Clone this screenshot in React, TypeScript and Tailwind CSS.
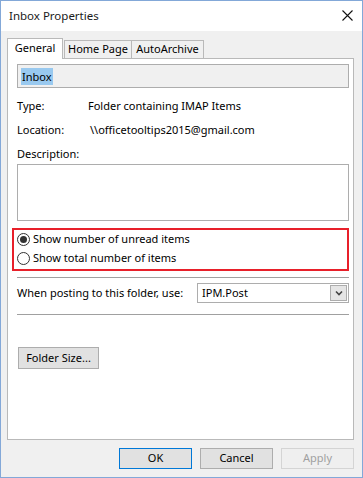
import React from 'react';

const font = { fontFamily: '"Noto Sans", "Open Sans", sans-serif' };

const Radio = ({ checked }: { checked?: boolean }) => (
  <span className="w-[13px] h-[13px] rounded-full border border-[#333333] bg-white flex items-center justify-center">
    {checked && <span className="w-[7px] h-[7px] rounded-full bg-[#333333]" />}
  </span>
);

const Field = ({ label, value, offset }: { label: string; value: string; offset?: string }) => (
  <div className="flex items-center h-[16px] mt-[8px]">
    <span className="w-[71px]">{label}</span>
    <span className={offset}>{value}</span>
  </div>
);

export default function App() {
  return (
    <div
      className="w-[363px] h-[478px] border border-[#83a8d8] bg-[#f0f0f0] flex flex-col text-[11px] text-black"
      style={font}
    >
      {/* Title bar */}
      <div className="h-[30px] bg-white flex items-center justify-between pl-[8px] pr-[9px]">
        <span className="text-[11.5px] text-[#1a1a1a]">Inbox Properties</span>
        <svg width="11" height="11" viewBox="0 0 11 11" className="mt-[-2px]">
          <path d="M0.5 0.5 L10.5 10.5 M10.5 0.5 L0.5 10.5" stroke="#111" strokeWidth="1.1" />
        </svg>
      </div>

      <div className="flex-1 flex flex-col pl-[6px] pr-[8px] pt-[7px]">
        {/* Tabs */}
        <div className="flex items-end h-[20px]">
          <div className="relative z-10 -mb-px h-[21px] w-[56px] bg-white border border-b-0 border-[#b9b9b9] flex items-center justify-center pb-[2px]">
            General
          </div>
          <div className="h-[18px] w-[68px] ml-px bg-[#f0f0f0] border border-b-0 border-[#b9b9b9] flex items-center justify-center">
            Home Page
          </div>
          <div className="h-[18px] w-[72px] bg-[#f0f0f0] border border-b-0 border-l-0 border-[#b9b9b9] flex items-center justify-center">
            AutoArchive
          </div>
        </div>

        {/* Panel */}
        <div className="h-[382px] bg-white border border-[#b9b9b9] pl-[9px] pr-[4px] pt-[5px] flex flex-col">
          <div className="h-[24px] border border-[#adadad] bg-[#f0f0f0] flex items-center pl-[3px]">
            <span className="bg-[#99c9ef] px-px leading-[17px]">Inbox</span>
          </div>

          <div className="mt-[2px]">
            <Field label="Type:" value="Folder containing IMAP Items" />
            <Field label="Location:" value="\\officetooltips2015@gmail.com" offset="ml-[2px]" />
            <div className="flex items-center h-[16px] mt-[8px]">Description:</div>
          </div>

          <div className="mt-[2px] h-[57px] border border-[#adadad] bg-white" />

          {/* Highlighted radio group */}
          <div className="mt-[7px] -ml-[5px] border-2 border-[#e8202a] pl-[3px]">
            <label className="flex items-center gap-[3px] h-[19px]">
              <Radio checked />
              <span>Show number of unread items</span>
            </label>
            <label className="flex items-center gap-[3px] h-[19px] mb-px">
              <Radio />
              <span>Show total number of items</span>
            </label>
          </div>

          <div className="mt-[6px] h-px bg-[#a0a0a0]" />

          <div className="mt-[5px] flex items-center h-[20px]">
            <span className="w-[180px]">When posting to this folder, use:</span>
            <div className="flex-1 h-[20px] border border-[#adadad] bg-white flex items-center justify-between pl-[4px] pr-px">
              <span>IPM.Post</span>
              <span className="w-[17px] h-[16px] border border-[#adadad] bg-[#e5e5e5] flex items-center justify-center">
                <svg width="8" height="6" viewBox="0 0 8 6">
                  <path d="M1 1.5 L4 4.5 L7 1.5" stroke="#444" strokeWidth="1.6" fill="none" />
                </svg>
              </span>
            </div>
          </div>

          <div className="mt-[11px] h-px bg-[#a0a0a0]" />

          <button className="mt-[32px] ml-px w-[81px] h-[22px] border border-[#adadad] bg-[#e1e1e1] flex items-center justify-center">
            Folder Size...
          </button>
        </div>

        {/* Dialog buttons */}
        <div className="mt-[8px] flex justify-end gap-[8px]">
          <button className="w-[73px] h-[21px] border border-[#0078d7] bg-[#e1e1e1] flex items-center justify-center">
            OK
          </button>
          <button className="w-[73px] h-[21px] border border-[#adadad] bg-[#e1e1e1] flex items-center justify-center">
            Cancel
          </button>
          <button className="w-[73px] h-[21px] border border-[#d4d4d4] bg-[#efefef] text-[#a0a0a0] flex items-center justify-center">
            Apply
          </button>
        </div>
      </div>
    </div>
  );
}
